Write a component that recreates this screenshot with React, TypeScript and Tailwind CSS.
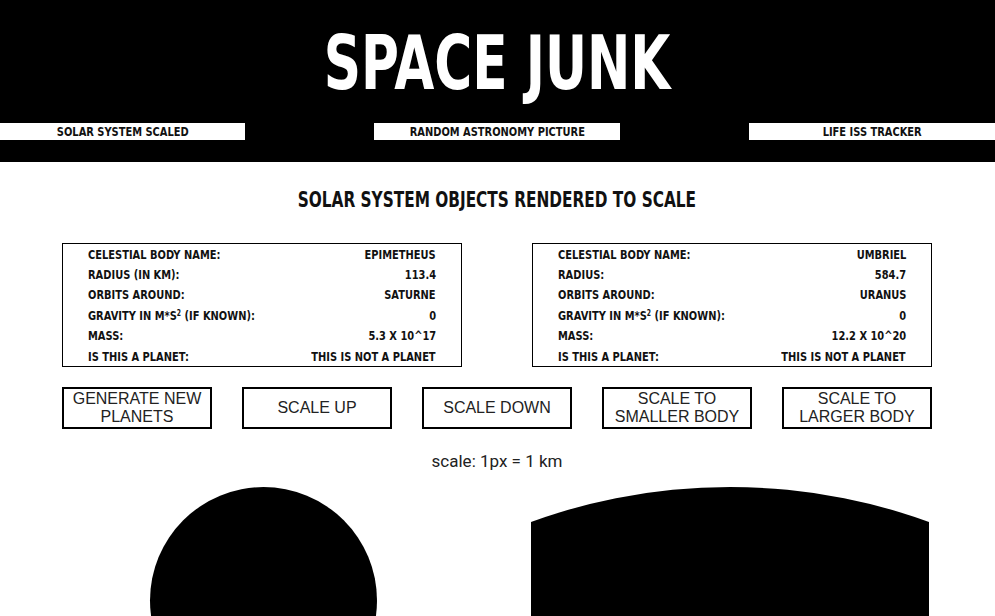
const display = "font-['DejaVu_Sans',sans-serif] font-bold uppercase"

type Body = {
  name: string
  radiusLabel: string
  radius: string
  orbits: string
  gravity: string
  mass: string
  planet: string
}

const bodies: Body[] = [
  {
    name: 'Epimetheus',
    radiusLabel: 'Radius (in km):',
    radius: '113.4',
    orbits: 'Saturne',
    gravity: '0',
    mass: '5.3 x 10^17',
    planet: 'This is not a planet',
  },
  {
    name: 'Umbriel',
    radiusLabel: 'Radius:',
    radius: '584.7',
    orbits: 'Uranus',
    gravity: '0',
    mass: '12.2 x 10^20',
    planet: 'This is not a planet',
  },
]

// the reference uses a condensed display face; squeeze DejaVu Bold to fit
function Row({ label, value }: { label: React.ReactNode; value: string }) {
  return (
    <div className="flex justify-between h-[20.4px] items-center">
      <span className="inline-block whitespace-nowrap origin-left scale-x-[0.76]">{label}</span>
      <span className="inline-block whitespace-nowrap origin-right scale-x-[0.76]">{value}</span>
    </div>
  )
}

function InfoBox({ body }: { body: Body }) {
  return (
    <div className={`${display} w-[400px] border border-black px-[25px] text-[13px] leading-none text-[#111]`}>
      <Row label="Celestial body name:" value={body.name} />
      <Row label={body.radiusLabel} value={body.radius} />
      <Row label="Orbits around:" value={body.orbits} />
      <Row
        label={
          <>
            Gravity in m*s<sup className="text-[8px]">2</sup> (if known):
          </>
        }
        value={body.gravity}
      />
      <Row label="Mass:" value={body.mass} />
      <Row label="Is this a planet:" value={body.planet} />
    </div>
  )
}

function NavLink({ label, width }: { label: string; width: string }) {
  return (
    <a className={`${width} h-[17px] bg-white flex items-center justify-center`}>
      <span className="inline-block whitespace-nowrap scale-x-[0.76]">{label}</span>
    </a>
  )
}

export default function App() {
  const buttons = [
    'Generate new planets',
    'Scale up',
    'Scale down',
    'Scale to smaller body',
    'Scale to larger body',
  ]
  const radii = [113.4, 584.7]

  return (
    <div className="h-[616px] overflow-hidden bg-white">
      <header className="bg-black h-[162px] flex flex-col">
        <h1 className={`${display} text-white text-[75px] leading-none pt-[26px] h-[123px] flex justify-center`}>
          <span className="inline-block whitespace-nowrap scale-x-[0.69]">Space Junk</span>
        </h1>
        <nav className={`${display} flex justify-between text-[13px] text-[#111]`}>
          <NavLink label="Solar System Scaled" width="w-[245px]" />
          <NavLink label="Random Astronomy Picture" width="w-[246px]" />
          <NavLink label="Life ISS Tracker" width="w-[246px]" />
        </nav>
      </header>

      <main className="w-[870px] ml-[62px] flex flex-col items-center">
        <h2 className={`${display} text-[21px] leading-none mt-[28px] text-[#111] flex justify-center`}>
          <span className="inline-block whitespace-nowrap scale-x-[0.73]">
            Solar system objects rendered to scale
          </span>
        </h2>

        <div className="w-full flex justify-between mt-[32px]">
          {bodies.map((b) => (
            <InfoBox key={b.name} body={b} />
          ))}
        </div>

        <div className="w-full flex justify-between mt-[20px]">
          {buttons.map((label) => (
            <button
              key={label}
              className="w-[150px] h-[42px] border-2 border-black uppercase text-[16px] leading-[18px] text-[#222] font-['Liberation_Sans',Arial,sans-serif] px-1"
            >
              {label}
            </button>
          ))}
        </div>

        <p className="mt-[24px] text-[17px] leading-none text-[#222] font-['Roboto',sans-serif]">
          scale: 1px = 1 km
        </p>

        <div className="w-full flex gap-[66px] mt-[17px]">
          {radii.map((r, i) => (
            <div
              key={r}
              className={`${i === 0 ? 'w-[403px]' : 'w-[398px]'} h-[200px] overflow-hidden flex justify-center`}
            >
              <div
                className="shrink-0 rounded-full bg-black"
                style={{ width: r * 2, height: r * 2 }}
              />
            </div>
          ))}
        </div>
      </main>
    </div>
  )
}
